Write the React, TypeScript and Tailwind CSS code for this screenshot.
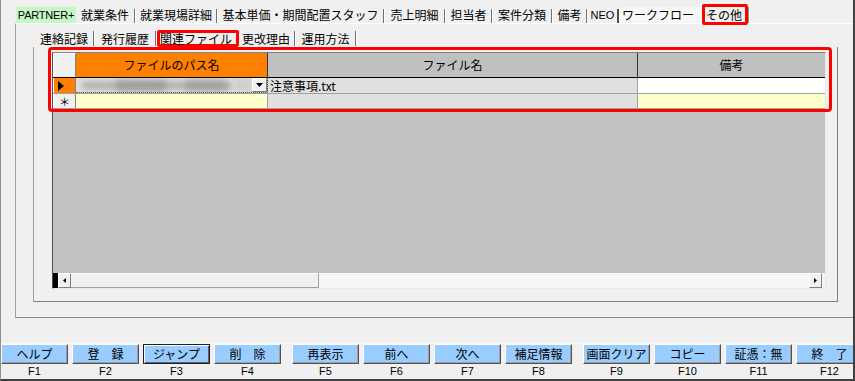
import React from 'react';

const mainTabs = [
  { label: '就業条件', w: 'w-[58px]' },
  { label: '就業現場詳細', w: 'w-[80px]' },
  { label: '基本単価・期間配置スタッフ', w: 'w-[165px]' },
  { label: '売上明細', w: 'w-[59px]' },
  { label: '担当者', w: 'w-[45px]' },
  { label: '案件分類', w: 'w-[58px]' },
  { label: '備考', w: 'w-[33px]' },
];

const subTabs = [
  { label: '連絡記録', w: 'w-[58px]' },
  { label: '発行履歴', w: 'w-[60px]' },
];

const keyGroups = [
  [['ヘルプ', 'F1'], ['登　録', 'F2'], ['ジャンプ', 'F3'], ['削　除', 'F4']],
  [['再表示', 'F5'], ['前へ', 'F6'], ['次へ', 'F7'], ['補足情報', 'F8']],
  [['画面クリア', 'F9'], ['コピー', 'F10'], ['証憑：無', 'F11'], ['終　了', 'F12']],
];

function Sep() {
  return <div className="w-[2px] h-[14px] mt-[2px] border-l border-l-[#707070] border-r border-r-white" />;
}

function MainTabs() {
  return (
    <div className="h-[23px] pt-[7px] pl-[15px] flex items-start">
      <div className="w-[60px] h-[16px] bg-[#c6f7c6] flex items-center justify-center font-['Liberation_Sans',sans-serif] text-[11px] tracking-[-0.2px]">
        PARTNER+
      </div>
      {mainTabs.map(t => (
        <React.Fragment key={t.label}>
          <div className={`${t.w} h-[16px] flex items-center justify-center`}>{t.label}</div>
          <Sep />
        </React.Fragment>
      ))}
      <div className="w-[29px] h-[16px] flex items-center justify-center font-['Liberation_Sans',sans-serif] text-[11px]">NEO</div>
      <div className="w-[2px] h-[14px] mt-[2px] border-l-2 border-l-[#505050]" />
      <div className="w-[83px] h-[16px] bg-[#f6f6f6] flex items-center pl-[3px]">ワークフロー</div>
      <div className="relative z-10 w-[46px] h-[21px] -mt-[3px] border-[3px] border-[#ff0000] rounded-[2px] bg-[#f0f0f0] flex items-center pl-[1px]">
        その他
      </div>
      <div className="w-[2px] h-[16px] border-l border-l-[#909090] border-r border-r-white" />
    </div>
  );
}

function SubTabs() {
  return (
    <div className="h-[23px] pt-[6px] pl-[19px] flex items-start">
      {subTabs.map(t => (
        <React.Fragment key={t.label}>
          <div className={`${t.w} h-[17px] flex items-center justify-center`}>{t.label}</div>
          <div className="w-[2px] h-[15px] mt-[1px] border-l border-l-[#707070] border-r border-r-white" />
        </React.Fragment>
      ))}
      <div className="relative z-10 w-[82px] h-[17px] border-[3px] border-[#ff0000] rounded-[2px] flex items-center leading-[11px]">
        関連ファイル
      </div>
      <div className="w-[55px] h-[17px] flex items-center pl-[3px]">更改理由</div>
      <div className="w-[2px] h-[15px] mt-[1px] border-l border-l-[#707070] border-r border-r-white" />
      <div className="w-[59px] h-[17px] flex items-center justify-center">運用方法</div>
      <div className="w-[2px] h-[15px] mt-[1px] border-l border-l-[#707070] border-r border-r-white" />
    </div>
  );
}

function ScrollButton({ dir }: { dir: 'left' | 'right' }) {
  return (
    <div className="w-[13px] h-[15px] bg-[#f0f0f0] border-t border-l border-white border-r border-r-[#808080] border-b border-b-[#808080] flex items-center justify-center">
      <svg width="3" height="5" viewBox="0 0 3 5">
        {dir === 'left' ? <polygon points="3,0 0,2.5 3,5" fill="#000" /> : <polygon points="0,0 3,2.5 0,5" fill="#000" />}
      </svg>
    </div>
  );
}

function Grid() {
  return (
    <div className="w-[774px] h-[237px] border-l border-l-[#505050] border-t border-t-[#808080] border-r border-r-[#e8e8e8] border-b border-b-[#e8e8e8] bg-[#c2c2c2] flex flex-col">
      {/* header */}
      <div className="flex h-[25px] border-b border-b-black">
        <div className="w-[23px] bg-[#f0f0f0] border-t border-l border-white border-r border-r-[#808080]" />
        <div className="w-[192px] bg-[#ff8000] flex items-center justify-center border-r border-r-[#303030]">
          ファイルのパス名
        </div>
        <div className="w-[370px] bg-[#c0c0c0] flex items-center justify-center border-r border-r-[#303030]">
          ファイル名
        </div>
        <div className="w-[187px] bg-[#c0c0c0] flex items-center justify-center">備考</div>
      </div>
      {/* row 1 */}
      <div className="flex h-[16px] border-b border-b-[#a0a0a0]">
        <div className="w-[23px] bg-[#ff8000] border-l border-white border-r border-r-[#808080] flex items-center pl-[4px]">
          <svg width="6" height="10" viewBox="0 0 6 10">
            <polygon points="0,0 6,5 0,10" fill="#000" />
          </svg>
        </div>
        <div className="w-[192px] flex border-b border-dotted border-b-[#606060] border-r border-r-[#303030]">
          <div className="flex-1 bg-[#e2e2e2] relative overflow-hidden">
            <div className="absolute left-[6px] top-[4px] w-[150px] h-[7px] bg-[#a8a8a8] blur-[3px]" />
            <div className="absolute left-[40px] top-[3px] w-[50px] h-[9px] bg-[#9c9c9c] blur-[3px]" />
            <div className="absolute left-[110px] top-[3px] w-[40px] h-[9px] bg-[#a0a0a0] blur-[3px]" />
            <div className="absolute right-0 top-0 w-[18px] h-full bg-[#d0d0d0] blur-[2px]" />
          </div>
          <div className="w-[15px] bg-[#f0f0f0] border border-t-white border-l-white border-r-[#808080] border-b-[#808080] flex items-center justify-center">
            <svg width="7" height="4" viewBox="0 0 7 4">
              <polygon points="0,0 7,0 3.5,4" fill="#000" />
            </svg>
          </div>
        </div>
        <div className="w-[370px] bg-[#e0e0e0] border-r border-r-[#a0a0a0] flex items-center pl-[2px]">注意事項.txt</div>
        <div className="w-[187px] bg-white" />
      </div>
      {/* row 2 */}
      <div className="flex h-[15px] border-b border-b-[#a0a0a0]">
        <div className="w-[23px] bg-[#f0f0f0] border-l border-white border-r border-r-[#808080] flex items-center justify-center text-[11px]">
          ＊
        </div>
        <div className="w-[192px] bg-[#ffffcc] border-r border-r-[#a0a0a0]" />
        <div className="w-[370px] bg-[#e0e0e0] border-r border-r-[#a0a0a0]" />
        <div className="w-[187px] bg-[#ffffcc]" />
      </div>
      <div className="flex-1" />
      {/* horizontal scrollbar */}
      <div className="h-[15px] flex bg-[#f6f6f6]">
        <div className="w-[5px] bg-black" />
        <ScrollButton dir="left" />
        <div className="w-[248px] bg-[#f0f0f0] border-t border-t-white border-r border-r-[#a0a0a0] border-b border-b-[#a0a0a0]" />
        <div className="flex-1" />
        <ScrollButton dir="right" />
        <div className="w-[3px]" />
      </div>
    </div>
  );
}

function FunctionKeys() {
  return (
    <div className="flex gap-[11px]">
      {keyGroups.map((group, gi) => (
        <div key={gi} className="flex gap-[4px]">
          {group.map(([label, key]) => (
            <div key={key} className="w-[67px] flex flex-col">
              <div
                className={`h-[20px] bg-[#99ccff] flex items-center justify-center ${
                  key === 'F3'
                    ? 'border border-[#202020] shadow-[inset_1px_1px_0_#ffffff,inset_-1px_-1px_0_#606060]'
                    : 'border border-t-white border-l-white border-r-[#505050] border-b-[#505050] shadow-[inset_-1px_-1px_0_#a0a0a0]'
                }`}
              >
                {label}
              </div>
              <div className="h-[13px] flex items-end justify-center font-['Liberation_Sans',sans-serif] text-[11px]">
                {key}
              </div>
            </div>
          ))}
        </div>
      ))}
    </div>
  );
}

export default function App() {
  return (
    <div className="w-[855px] h-[381px] overflow-hidden bg-[#f0f0f0] border-l border-l-[#909090] border-r-2 border-r-[#404040] border-b-2 border-b-[#404040] font-['Noto_Sans_CJK_JP',sans-serif] text-[12px] leading-none text-black flex flex-col">
      <MainTabs />

      {/* outer tab page */}
      <div className="ml-[14px] h-[295px] border-l border-l-[#a0a0a0] border-t border-t-white border-b border-b-[#8a8a8a] flex flex-col">
        <SubTabs />
        <div className="relative ml-[17px] w-[805px] h-[255px] border-l border-l-[#a0a0a0] border-r border-r-[#808080] border-b border-b-[#808080] pt-[5px] pl-[18px]">
          <Grid />
          <div className="absolute left-[14px] top-0 w-[784px] h-[65px] border-[3px] border-[#ff0000] rounded-[4px]" />
        </div>
      </div>

      <div className="h-[26px] border-b border-b-[#f8f8f8]" />
      <FunctionKeys />
    </div>
  );
}
